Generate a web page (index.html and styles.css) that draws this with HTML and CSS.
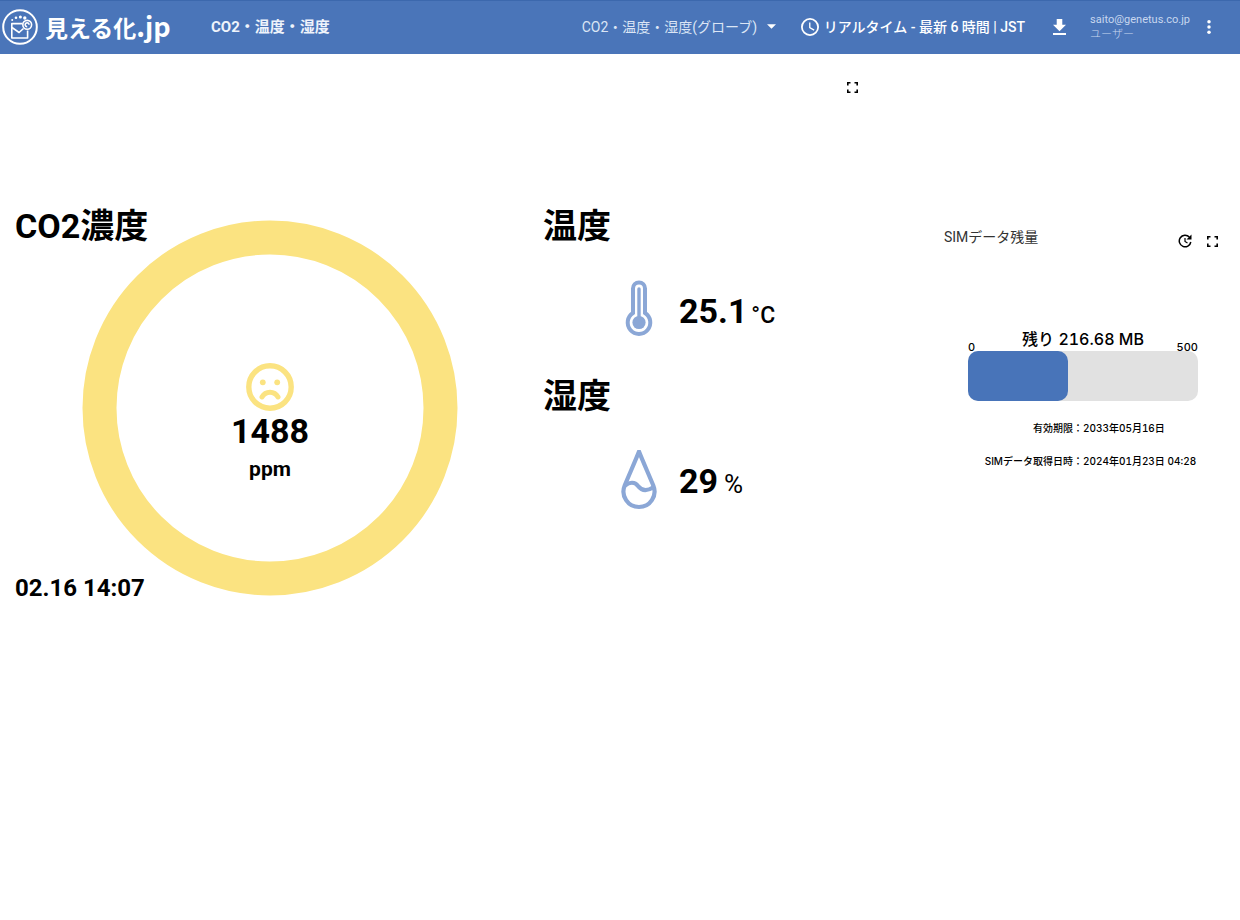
FILE: index.html
```html
<!DOCTYPE html>
<html lang="ja">
<head>
<meta charset="utf-8">
<meta name="viewport" content="width=device-width, initial-scale=1">
<title>CO2・温度・湿度</title>
<link rel="stylesheet" href="styles.css">
</head>
<body>
<header class="topbar">
  <a class="brand" href="#">
    <svg class="brand-mark" viewBox="0 0 36 36" fill="none" stroke="currentColor" stroke-width="1.6" aria-hidden="true">
      <circle cx="18" cy="18" r="16.8" stroke-width="2"/>
      <path d="M20.500 14.600H9.800V29h15.800V21.500" stroke-linejoin="round"/>
      <path d="M10 18.500l7 5 4.500-4"/>
      <circle cx="25.200" cy="15.800" r="4.400"/>
      <path d="M25.200 17.600a1.900 1.900 0 1 1 1.800-1.800"/>
      <g fill="currentColor" stroke="none"><circle cx="10.200" cy="11" r="1"/><circle cx="14" cy="8.800" r="1.300"/><circle cx="18.400" cy="8" r="1.500"/><circle cx="22.800" cy="9" r="1.700"/></g>
    </svg>
    <span class="brand-name">見える化<span class="brand-tld">.jp</span></span>
  </a>
  <h1 class="page-title">CO2・温度・湿度</h1>
  <div class="tools">
    <label class="picker">
      <select class="picker-select" aria-label="ダッシュボード">
        <option>CO2・温度・湿度(グローブ)</option>
      </select>
      <svg class="picker-arrow" viewBox="0 0 10 5" aria-hidden="true"><path d="M0 0h10L5 5z" fill="currentColor"/></svg>
    </label>
    <button class="time" type="button">
      <svg class="time-icon" viewBox="2 2 20 20" fill="currentColor" aria-hidden="true"><path d="M12 2a10 10 0 1 0 0 20 10 10 0 0 0 0-20zm0 18a8 8 0 1 1 0-16 8 8 0 0 1 0 16zm.5-13H11v6l5.2 3.2.8-1.300-4.500-2.700z"/></svg>
      <span>リアルタイム - 最新 6 時間 | JST</span>
    </button>
    <button class="icon-button download" type="button" aria-label="ダウンロード">
      <svg class="download-icon" viewBox="5 3 14 17" fill="currentColor" aria-hidden="true"><path d="M19 9h-4V3H9v6H5l7 7zM5 18v2h14v-2z"/></svg>
    </button>
    <div class="user">
      <span>saito@genetus.co.jp</span>
      <span class="user-role">ユーザー</span>
    </div>
    <button class="icon-button" type="button" aria-label="メニュー">
      <svg class="more-icon" viewBox="0 0 4 16" fill="currentColor" aria-hidden="true"><circle cx="2" cy="2" r="2"/><circle cx="2" cy="8" r="2"/><circle cx="2" cy="14" r="2"/></svg>
    </button>
  </div>
</header>

<main class="board">
  <div class="board-tools">
    <button class="icon-button" type="button" aria-label="全画面表示">
      <svg class="expand-icon" viewBox="0 0 11 11" fill="none" stroke="currentColor" stroke-width="1.600" aria-hidden="true"><path d="M.8 3.500V.8h2.700M7.500.8h2.700v2.700M10.200 7.500v2.700H7.500M3.500 10.200H.8V7.500"/></svg>
    </button>
  </div>

  <section class="co2">
    <h2 class="heading">CO2濃度</h2>
    <svg class="ring" viewBox="0 0 376 376" fill="none" aria-hidden="true"><circle cx="188" cy="188" r="170.500" stroke="currentColor" stroke-width="34"/></svg>
    <div class="reading">
      <svg class="face" viewBox="0 0 48 48" fill="none" stroke="currentColor" aria-hidden="true">
        <circle cx="24" cy="24" r="21.200" stroke-width="5.400"/>
        <path d="M16 34c3.500-6.500 12.500-6.500 16 0" stroke-width="5" stroke-linecap="round"/>
        <circle cx="16.800" cy="19.300" r="2.900" fill="currentColor" stroke="none"/><circle cx="31.200" cy="19.300" r="2.900" fill="currentColor" stroke="none"/>
      </svg>
      <span class="value">1488</span>
      <span class="ppm">ppm</span>
    </div>
    <time class="stamp">02.16 14:07</time>
  </section>

  <div class="climate">
    <section class="metric">
      <h2 class="heading">温度</h2>
      <div class="metric-body">
        <svg class="metric-icon" viewBox="0 0 36 62" fill="none" stroke="currentColor" aria-hidden="true">
          <path d="M12 8.500a6 6 0 0 1 12 0V33a11.300 11.300 0 1 1-12 0z" stroke-width="4"/>
          <path d="M18 9v30" stroke-width="3.400" stroke-linecap="round"/><circle cx="18" cy="42.500" r="6.600" fill="currentColor" stroke="none"/>
        </svg>
        <p class="metric-value"><span class="value">25.1</span> <span class="unit celsius">°C</span></p>
      </div>
    </section>
    <section class="metric">
      <h2 class="heading">湿度</h2>
      <div class="metric-body">
        <svg class="metric-icon" viewBox="0 0 36 62" fill="none" stroke="currentColor" stroke-width="4.200" stroke-linejoin="round" aria-hidden="true">
          <path d="M18 1.500C14.500 10.500 8 25 3.700 35.500A15.500 15.500 0 1 0 32.300 35.500C28 25 21.500 10.500 18 1.500z"/>
          <path d="M4 35.500c5-3.800 10-3.400 13 .5s8 5.800 15 1.500"/>
        </svg>
        <p class="metric-value"><span class="value">29</span> <span class="unit percent">%</span></p>
      </div>
    </section>
  </div>

  <section class="sim">
    <div class="sim-head">
      <h2 class="sim-title">SIMデータ残量</h2>
      <div class="sim-actions">
        <button class="icon-button" type="button" aria-label="更新">
          <svg class="refresh-icon" viewBox="0 0 14 14" fill="none" stroke="currentColor" aria-hidden="true"><path d="M11.300 3A5.800 5.800 0 1 0 12.800 8" stroke-width="1.500"/><path d="M13.500.5v5h-5z" fill="currentColor" stroke="none"/><path d="M7 4v3.400l2.500 1.500" stroke-width="1.200"/></svg>
        </button>
        <button class="icon-button" type="button" aria-label="全画面表示">
          <svg class="expand-icon" viewBox="0 0 11 11" fill="none" stroke="currentColor" stroke-width="1.600" aria-hidden="true"><path d="M.8 3.500V.8h2.700M7.500.8h2.700v2.700M10.200 7.500v2.700H7.500M3.500 10.200H.8V7.500"/></svg>
        </button>
      </div>
    </div>
    <div class="sim-body">
      <p class="remain">残り 216.68 MB</p>
      <div class="scale"><span>0</span><span>500</span></div>
      <div class="bar"><div class="bar-fill" style="width:43.4%"></div></div>
      <dl class="facts">
        <dt>有効期限：</dt><dd>2033年05月16日</dd>
        <dt>SIMデータ取得日時：</dt><dd>2024年01月23日 04:28</dd>
      </dl>
    </div>
  </section>
</main>
</body>
</html>
```

FILE: styles.css
```css
* { box-sizing: border-box; }

body {
  margin: 0;
  background: #fff;
  color: #000;
  font-family: Roboto, "Noto Sans CJK JP", sans-serif;
}

h1, h2, p, dl, dd { margin: 0; }

button {
  border: 0;
  padding: 0;
  background: none;
  color: inherit;
  font: inherit;
}

svg { display: block; flex: none; }

.icon-button { display: flex; }

/* Header */
.topbar {
  display: flex;
  align-items: center;
  height: 54px;
  padding: 0 29px 2px 2px;
  border-top: 1px solid #3c68ad;
  background: #4a75b9;
  color: #fff;
}

.brand {
  display: flex;
  align-items: center;
  gap: 7px;
  width: 209px;
  color: #fff;
  text-decoration: none;
}

.brand-mark { width: 36px; height: 36px; }

.brand-name {
  font: 700 23px/36px "Noto Sans CJK JP", sans-serif;
  white-space: nowrap;
}

.brand-tld { font-size: 27px; }

.page-title {
  font-size: 15px;
  line-height: 20px;
  font-weight: 700;
  color: #eef3fb;
}

.tools {
  display: flex;
  align-items: center;
  margin-left: auto;
}

.picker {
  display: flex;
  align-items: center;
  gap: 8px;
  margin-right: 25px;
}

.picker-select {
  appearance: none;
  border: 0;
  padding: 0;
  background: none;
  color: #dbe5f5;
  font: 400 14px/20px Roboto, "Noto Sans CJK JP", sans-serif;
}

.picker-arrow { width: 9px; height: 5px; }

.time {
  display: flex;
  align-items: center;
  gap: 5px;
  margin-right: 28px;
  font-size: 14px;
  line-height: 20px;
  font-weight: 500;
}

.time-icon { width: 18px; height: 18px; }
.download { margin-right: 24px; }
.download-icon { width: 13px; height: 16px; }

.user {
  display: flex;
  flex-direction: column;
  margin-right: 17px;
  color: #c8d7ef;
  font-size: 11px;
  line-height: 15px;
}

.user-role { font-weight: 300; }
.more-icon { width: 4px; height: 14px; }

/* Dashboard */
.board {
  display: grid;
  grid-template-columns: 529fr 401fr 310fr;
  grid-template-rows: 152px auto;
}

.board-tools {
  grid-row: 1;
  grid-column: 1 / 3;
  padding: 28px 72px 0 0;
  justify-self: end;
}

.expand-icon { width: 11px; height: 11px; }

.heading {
  font-size: 34px;
  line-height: 40px;
  font-weight: 700;
}

.value {
  font-size: 34px;
  line-height: 40px;
  font-weight: 700;
}

.co2 {
  grid-row: 2;
  grid-column: 1;
  display: grid;
  grid-template-columns: 1fr;
  padding-left: 15px;
}

.co2 > * { grid-area: 1 / 1; }

.ring {
  width: 376px;
  height: 376px;
  margin: 14px 0 6px 67px;
  color: #fbe381;
}

.reading {
  display: flex;
  flex-direction: column;
  align-items: center;
  width: 376px;
  margin: 157px 0 0 67px;
}

.face {
  width: 48px;
  height: 48px;
  color: #fbe381;
}

.ppm {
  margin-top: 6px;
  font-size: 21px;
  line-height: 24px;
  font-weight: 700;
}

.stamp {
  align-self: end;
  font-size: 24px;
  line-height: 28px;
  font-weight: 700;
}

.climate {
  grid-row: 2;
  grid-column: 2;
  display: flex;
  flex-direction: column;
  gap: 30px;
  padding-left: 14px;
}

.metric {
  display: flex;
  flex-direction: column;
  gap: 30px;
}

.metric-body {
  display: flex;
  align-items: center;
  gap: 22px;
  height: 70px;
  padding-left: 78px;
}

.metric-icon {
  width: 36px;
  height: 62px;
  color: #8ba7d6;
}

.celsius { font-size: 23px; font-weight: 500; }
.percent { margin-left: 2px; font-size: 26px; }

/* SIM card */
.sim {
  grid-row: 2;
  grid-column: 3;
  padding: 21px 22px 0 14px;
}

.sim-head {
  display: flex;
  justify-content: space-between;
}

.sim-title {
  color: #333;
  font-size: 14px;
  line-height: 20px;
  font-weight: 400;
}

.sim-actions {
  display: flex;
  align-items: center;
  gap: 15px;
  padding-top: 7px;
}

.refresh-icon { width: 14px; height: 14px; }

.sim-body {
  padding: 81px 20px 0 24px;
  font-family: Inter, "Noto Sans CJK JP", sans-serif;
  font-weight: 500;
  font-variant-numeric: tabular-nums;
}

.remain {
  font-size: 16px;
  line-height: 20px;
  text-align: center;
}

.scale {
  display: flex;
  justify-content: space-between;
  margin-top: -7px;
  font-size: 11px;
  line-height: 10px;
}

.bar {
  height: 50px;
  margin-top: -1px;
  border-radius: 10px;
  background: #e1e1e1;
}

.bar-fill {
  height: 100%;
  border-radius: 10px;
  background: #4874b9;
}

.facts {
  display: grid;
  grid-template-columns: 1fr 1fr;
  row-gap: 17px;
  margin-top: 19px;
  font-size: 10px;
  line-height: 16px;
  white-space: nowrap;
}

.facts dt { justify-self: end; }
```
